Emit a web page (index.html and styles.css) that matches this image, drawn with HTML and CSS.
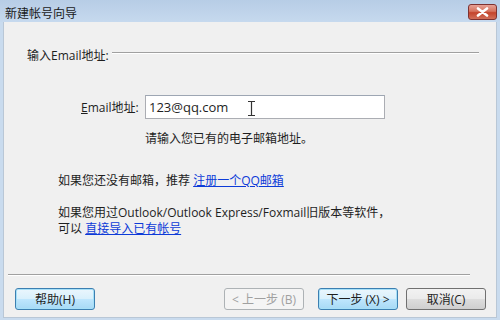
FILE: index.html
```html
<!DOCTYPE html>
<html>
<head>
<meta charset="utf-8">
<link rel="stylesheet" href="styles.css">
</head>
<body>
<div class="window">
  <div class="titlebar">
    <span class="title">新建帐号向导</span>
    <div class="close">
      <svg width="13" height="10" viewBox="0 0 13 10"><path d="M2 1.5 L11 8.5 M11 1.5 L2 8.5" stroke="#fff" stroke-width="2.6" stroke-linecap="round"/></svg>
    </div>
  </div>
  <div class="body">
    <div class="content">
      <div class="section-head">
        <span class="section-title">输入Email地址:</span>
        <span class="rule"></span>
      </div>
      <div class="email-row">
        <label class="email-label"><u>E</u>mail地址:</label>
        <div class="input">
          <span class="value">123@qq.com</span>
          <svg class="ibeam" width="9" height="17" viewBox="0 0 9 17"><path d="M1 1.5 H8 M4.5 1.5 V15.5 M1 15.5 H8" stroke="#333" stroke-width="1.2" fill="none"/></svg>
        </div>
      </div>
      <div class="hint">请输入您已有的电子邮箱地址。</div>
      <p class="para p1">如果您还没有邮箱，推荐 <a class="link">注册一个QQ邮箱</a></p>
      <p class="para p2">如果您用过Outlook/Outlook Express/Foxmail旧版本等软件，<br>可以 <a class="link">直接导入已有帐号</a></p>
    </div>
    <div class="sep"></div>
    <div class="buttons">
      <button class="btn focus">帮助(H)</button>
      <div class="spacer"></div>
      <button class="btn disabled">&lt; 上一步 (B)</button>
      <button class="btn default">下一步 (X) &gt;</button>
      <button class="btn">取消(C)</button>
    </div>
  </div>
</div>
</body>
</html>
```

FILE: styles.css
```css
html, body {
  margin: 0;
  padding: 0;
}
body {
  width: 500px;
  height: 320px;
  overflow: hidden;
  font-family: "Open Sans", "Noto Sans CJK SC", sans-serif;
  font-size: 12px;
  color: #1e1e1e;
}
.window {
  width: 500px;
  height: 320px;
  display: flex;
  flex-direction: column;
  background: #c9dbee;
  box-sizing: border-box;
}
.titlebar {
  height: 22px;
  flex: none;
  display: flex;
  align-items: center;
  justify-content: space-between;
  background: linear-gradient(#b7cde6, #c6d9ee);
  padding: 0 3px 0 5px;
}
.title {
  font-family: "Noto Sans CJK SC", sans-serif;
  font-size: 12px;
  color: #1a1a1a;
  margin-top: 2px;
}
.close {
  width: 29px;
  height: 16px;
  margin-top: 1px;
  box-sizing: border-box;
  border: 1px solid #7e3231;
  border-radius: 3px;
  background: linear-gradient(#e6a196 0%, #d5735e 45%, #c4442c 55%, #d1705a 100%);
  display: flex;
  align-items: center;
  justify-content: center;
}
.body {
  flex: 1;
  margin: 0 3px 2px 3px;
  background: #f0f0f0;
  border-left: 1px solid #b9c7d6;
  border-right: 1px solid #b9c7d6;
  border-bottom: 1px solid #b9c7d6;
  display: flex;
  flex-direction: column;
}
.content {
  flex: 1;
  padding: 24px 0 0 23px;
}
.section-head {
  display: flex;
  align-items: center;
  height: 18px;
}
.section-title {
  white-space: nowrap;
}
.rule {
  flex: 1;
  height: 0;
  margin: -5px 17px 0 3px;
  border-top: 1px solid #a0a0a0;
  border-bottom: 1px solid #ffffff;
}
.email-row {
  display: flex;
  align-items: center;
  margin-top: 31px;
  padding-left: 54px;
}
.email-label {
  width: 64px;
}
.input {
  position: relative;
  width: 240px;
  height: 24px;
  box-sizing: border-box;
  border: 1px solid #abadb3;
  border-top-color: #9da6b3;
  background: #fff;
  display: flex;
  align-items: center;
  padding-left: 3px;
  font-size: 13px;
}
.ibeam {
  position: absolute;
  left: 101px;
  top: 4px;
}
.hint {
  margin: 12px 0 0 118px;
  line-height: 16px;
}
.para {
  margin: 0 0 0 31px;
  line-height: 16px;
}
.p1 {
  margin-top: 26px;
}
.p2 {
  margin-top: 16px;
}
.link {
  color: #0d3bd8;
  text-decoration: underline;
}
.sep {
  flex: none;
  height: 0;
  margin: 0 26px 0 4px;
  border-top: 1px solid #a0a0a0;
  border-bottom: 1px solid #ffffff;
}
.buttons {
  flex: none;
  display: flex;
  padding: 12px 10px 7px 11px;
  gap: 0;
}
.spacer {
  flex: 1;
}
.btn {
  width: 80px;
  height: 22px;
  box-sizing: border-box;
  font-family: "Open Sans", "Noto Sans CJK SC", sans-serif;
  font-size: 12px;
  color: #1e1e1e;
  border: 1px solid #707070;
  border-radius: 3px;
  background: linear-gradient(#f2f2f2 0%, #ebebeb 48%, #dddddd 52%, #cfcfcf 100%);
  padding: 0;
  margin-left: 8px;
}
.btn:first-child {
  margin-left: 0;
}
.btn.focus,
.btn.default {
  border: 1px solid #3c7fb1;
  box-shadow: inset 0 0 0 1px #a6e0f8;
  background: linear-gradient(#eaf6fd 0%, #d9f0fc 48%, #bee6fd 52%, #a7d9f5 100%);
}
.btn.default {
  margin-left: 14px;
}
.btn.disabled {
  color: #a0a0a0;
  border-color: #adb2b5;
  background: #f4f4f4;
}
```
